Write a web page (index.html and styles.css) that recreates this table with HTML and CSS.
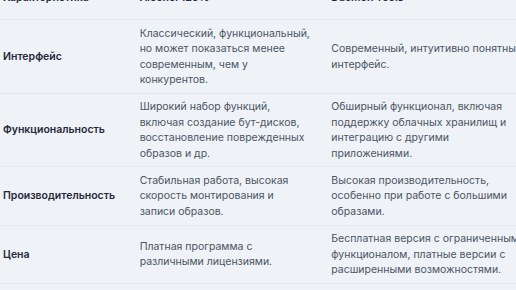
FILE: index.html
```html
<!DOCTYPE html>
<html lang="ru">
<head>
<meta charset="utf-8">
<link rel="stylesheet" href="styles.css">
</head>
<body>
<div class="wrap">
<table class="cmp">
  <colgroup>
    <col class="c1"><col class="c2"><col class="c3">
  </colgroup>
  <thead>
    <tr><th>Характеристика</th><th class="mid">Alcohol 120%</th><th>Daemon Tools</th></tr>
  </thead>
  <tbody>
    <tr>
      <td class="feat">Интерфейс</td>
      <td class="mid"><span class="keep">Классический, функциональный,</span> но может показаться менее современным, чем у конкурентов.</td>
      <td>Современный, интуитивно понятный интерфейс.</td>
    </tr>
    <tr>
      <td class="feat">Функциональность</td>
      <td class="mid">Широкий набор функций, включая создание бут-дисков, восстановление поврежденных образов и др.</td>
      <td>Обширный функционал, включая поддержку облачных хранилищ и интеграцию с другими приложениями.</td>
    </tr>
    <tr>
      <td class="feat">Производительность</td>
      <td class="mid">Стабильная работа, высокая скорость монтирования и записи образов.</td>
      <td>Высокая производительность, особенно при работе с большими образами.</td>
    </tr>
    <tr>
      <td class="feat">Цена</td>
      <td class="mid">Платная программа с различными лицензиями.</td>
      <td>Бесплатная версия с ограниченным функционалом, платные версии с расширенными возможностями.</td>
    </tr>
  </tbody>
</table>
</div>
</body>
</html>
```
FILE: styles.css
```css
html, body {
  margin: 0;
  padding: 0;
  background: #eff2f7;
  overflow: hidden;
}
.wrap {
  width: 516px;
  height: 290px;
  overflow: hidden;
}
.cmp {
  border-collapse: collapse;
  table-layout: fixed;
  width: 537.5px;
  margin-left: -5px;
  margin-top: -16px;
  font-family: Inter, "Noto Sans", sans-serif;
  font-size: 10.5px;
  line-height: 15.4px;
  color: #4b5563;
}
.c1 { width: 136.5px; }
.c2 { width: 191.5px; }
.c3 { width: 209px; }
.cmp th {
  text-align: left;
  font-weight: 600;
  color: #1f2937;
  padding: 5.5px 8px 14.3px;
  border-bottom: 1px solid #e3e7ee;
}
.cmp td {
  padding: 5.5px 8px;
  vertical-align: middle;
  border-bottom: 1px solid #e3e7ee;
}
.cmp .mid {
  padding-right: 17px;
}
.cmp td.feat {
  font-weight: 600;
  color: #1f2937;
}
.keep {
  white-space: nowrap;
}
```
